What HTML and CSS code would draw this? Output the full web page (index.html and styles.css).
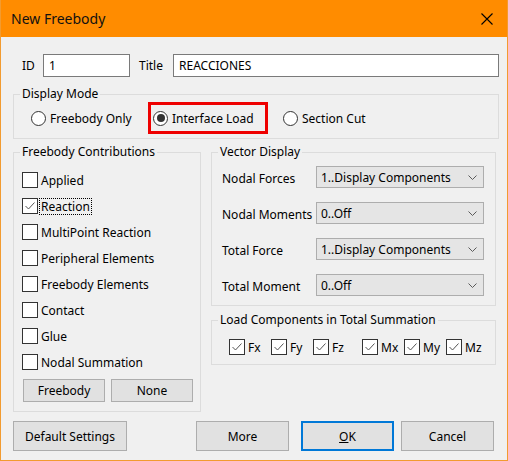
FILE: index.html
```html
<!DOCTYPE html>
<html lang="en">
<head>
  <meta charset="UTF-8" />
  <title>New Freebody</title>
  <link rel="stylesheet" href="styles.css">
</head>
<body>
  <div class="dialog">
    <div class="titlebar">
      <span class="title">New Freebody</span>
      <svg class="close" width="12" height="12" viewBox="0 0 12 12">
        <path d="M0.5 0.5 L11.5 11.5 M11.5 0.5 L0.5 11.5" stroke="#000" stroke-width="1.1" fill="none"/>
      </svg>
    </div>

    <div class="content">
      <div class="id-row">
        <span class="id-label">ID</span>
        <div class="field id-field">1</div>
        <span class="title-label">Title</span>
        <div class="field title-field">REACCIONES</div>
      </div>

      <fieldset class="group mode-group">
        <legend>Display Mode</legend>
        <div class="radio-row">
          <div class="radio radio-first"><span class="radio-dot"></span>Freebody Only</div>
          <div class="radio radio-marked"><span class="radio-dot checked"></span>Interface Load</div>
          <div class="radio"><span class="radio-dot"></span>Section Cut</div>
        </div>
      </fieldset>

      <div class="columns">
        <fieldset class="group contrib-group">
          <legend>Freebody Contributions</legend>
          <div class="contrib-list">
            <div class="check-row"><span class="box"></span>Applied</div>
            <div class="check-row"><span class="box ticked"></span><span class="focused">Reaction</span></div>
            <div class="check-row"><span class="box"></span>MultiPoint Reaction</div>
            <div class="check-row"><span class="box"></span>Peripheral Elements</div>
            <div class="check-row"><span class="box"></span>Freebody Elements</div>
            <div class="check-row"><span class="box"></span>Contact</div>
            <div class="check-row"><span class="box"></span>Glue</div>
            <div class="check-row"><span class="box"></span>Nodal Summation</div>
            <div class="contrib-buttons">
              <div class="btn small-btn">Freebody</div>
              <div class="btn small-btn">None</div>
            </div>
          </div>
        </fieldset>

        <div class="right-col">
          <fieldset class="group vector-group">
            <legend>Vector Display</legend>
            <div class="vector-list">
              <div class="vector-row">
                <span class="vector-label">Nodal Forces</span>
                <div class="select"><span>1..Display Components</span><svg width="9" height="5" viewBox="0 0 9 5"><path d="M0.5 0.5 L4.5 4.5 L8.5 0.5" stroke="#5a5a5a" fill="none"/></svg></div>
              </div>
              <div class="vector-row">
                <span class="vector-label">Nodal Moments</span>
                <div class="select"><span>0..Off</span><svg width="9" height="5" viewBox="0 0 9 5"><path d="M0.5 0.5 L4.5 4.5 L8.5 0.5" stroke="#5a5a5a" fill="none"/></svg></div>
              </div>
              <div class="vector-row">
                <span class="vector-label">Total Force</span>
                <div class="select"><span>1..Display Components</span><svg width="9" height="5" viewBox="0 0 9 5"><path d="M0.5 0.5 L4.5 4.5 L8.5 0.5" stroke="#5a5a5a" fill="none"/></svg></div>
              </div>
              <div class="vector-row">
                <span class="vector-label">Total Moment</span>
                <div class="select"><span>0..Off</span><svg width="9" height="5" viewBox="0 0 9 5"><path d="M0.5 0.5 L4.5 4.5 L8.5 0.5" stroke="#5a5a5a" fill="none"/></svg></div>
              </div>
            </div>
          </fieldset>

          <fieldset class="group load-group">
            <legend>Load Components in Total Summation</legend>
            <div class="load-row">
              <div class="load-item"><span class="box ticked"></span>Fx</div>
              <div class="load-item"><span class="box ticked"></span>Fy</div>
              <div class="load-item"><span class="box ticked"></span>Fz</div>
              <div class="load-item moments"><span class="box ticked"></span>Mx</div>
              <div class="load-item"><span class="box ticked"></span>My</div>
              <div class="load-item"><span class="box ticked"></span>Mz</div>
            </div>
          </fieldset>
        </div>
      </div>

      <div class="button-row">
        <div class="btn defaults-btn">Default Settings</div>
        <div class="btn wide-btn more-btn">More</div>
        <div class="btn wide-btn ok-btn"><u>O</u>K</div>
        <div class="btn wide-btn cancel-btn">Cancel</div>
      </div>
    </div>
  </div>
</body>
</html>
```

FILE: styles.css
```css
body {
  margin: 0;
  font-family: "Noto Sans", "Liberation Sans", sans-serif;
  font-size: 12px;
  color: #000;
  background: #fff;
}

.dialog {
  width: 508px;
  height: 461px;
  box-sizing: border-box;
  border: 1px solid #f29b30;
  border-top: none;
  background: #f0f0f0;
}

.titlebar {
  height: 37px;
  background: #ff8c00;
  display: flex;
  align-items: center;
  justify-content: space-between;
  padding: 0 14px 0 10px;
  box-sizing: border-box;
  font-size: 14px;
  color: #111;
}

.content {
  padding: 17px 8px 0 12px;
}

/* ID / Title row */
.id-row {
  display: flex;
  align-items: center;
  height: 23px;
}

.id-label {
  margin-left: 9px;
  width: 21px;
}

.title-label {
  margin-left: 9px;
  width: 34px;
}

.field {
  height: 23px;
  box-sizing: border-box;
  border: 1px solid #7a7a7a;
  background: #fff;
  padding-left: 5px;
  line-height: 21px;
}

.id-field {
  width: 87px;
}

.title-field {
  flex: 1;
}

/* group boxes */
.group {
  margin: 0;
  padding: 0;
  min-width: 0;
  border: 1px solid #dcdcdc;
}

.group legend {
  margin-left: 6px;
  padding: 0 2px;
  line-height: 16px;
}

.mode-group {
  margin-top: 9px;
}

.radio-row {
  display: flex;
  align-items: center;
  height: 32px;
  padding: 0 0 4px 17px;
}

.radio {
  display: flex;
  align-items: center;
  height: 32px;
  box-sizing: border-box;
}

.radio-first {
  width: 117px;
}

.radio-marked {
  width: 120px;
  border: 3px solid #ee0000;
  padding-left: 2px;
  margin-right: 15px;
}

.radio-dot {
  width: 15px;
  height: 15px;
  box-sizing: border-box;
  border: 1px solid #333;
  border-radius: 50%;
  background: #fff;
  margin-right: 4px;
  display: flex;
  align-items: center;
  justify-content: center;
}

.radio-dot.checked::after {
  content: "";
  width: 8px;
  height: 8px;
  border-radius: 50%;
  background: #333;
}

.columns {
  display: flex;
  gap: 10px;
  margin-top: 5px;
}

/* checkboxes */
.box {
  width: 16px;
  height: 16px;
  box-sizing: border-box;
  border: 1px solid #333;
  background: #fff;
  margin-right: 3px;
  flex-shrink: 0;
}

.box.ticked {
  background: #fff url("data:image/svg+xml,%3Csvg xmlns='http://www.w3.org/2000/svg' width='14' height='14'%3E%3Cpath d='M2.5 7 L5.5 10 L11.5 3.5' stroke='%23555' stroke-width='1' fill='none'/%3E%3C/svg%3E") no-repeat center;
}

.contrib-group {
  width: 188px;
  box-sizing: border-box;
}

.contrib-list {
  padding: 7px 0 9px 8px;
}

.check-row {
  display: flex;
  align-items: center;
  height: 26px;
}

.focused {
  outline: 1px dotted #000;
  line-height: 15px;
  padding: 0 1px;
  margin-left: -1px;
}

.contrib-buttons {
  display: flex;
  gap: 6px;
  margin-top: 4px;
  padding-left: 1px;
}

.btn {
  display: flex;
  align-items: center;
  justify-content: center;
  box-sizing: border-box;
  background: #e1e1e1;
  border: 1px solid #adadad;
}

.small-btn {
  width: 82px;
  height: 23px;
}

/* vector display */
.right-col {
  width: 285px;
}

.vector-list {
  display: flex;
  flex-direction: column;
  gap: 14px;
  padding: 6px 11px 9px 10px;
}

.vector-row {
  display: flex;
  align-items: center;
  height: 22px;
}

.vector-label {
  width: 94px;
  padding-top: 3px;
}

.select {
  flex: 1;
  height: 22px;
  box-sizing: border-box;
  border: 1px solid #adadad;
  background: #e5e5e5;
  display: flex;
  align-items: center;
  justify-content: space-between;
  padding: 0 6px 0 4px;
}

.load-group {
  margin-top: 6px;
}

.load-row {
  display: flex;
  align-items: center;
  height: 16px;
  padding: 11px 0 9px 17px;
}

.load-item {
  display: flex;
  align-items: center;
  width: 42px;
}

.load-item.moments {
  margin-left: 7px;
}

/* bottom buttons */
.button-row {
  display: flex;
  margin-top: 9px;
  height: 30px;
}

.button-row .btn {
  height: 30px;
}

.defaults-btn {
  width: 114px;
}

.wide-btn {
  width: 93px;
}

.more-btn {
  margin-left: 69px;
}

.ok-btn {
  margin-left: 12px;
  border: 2px solid #0078d7;
}

.cancel-btn {
  margin-left: 7px;
}
```
